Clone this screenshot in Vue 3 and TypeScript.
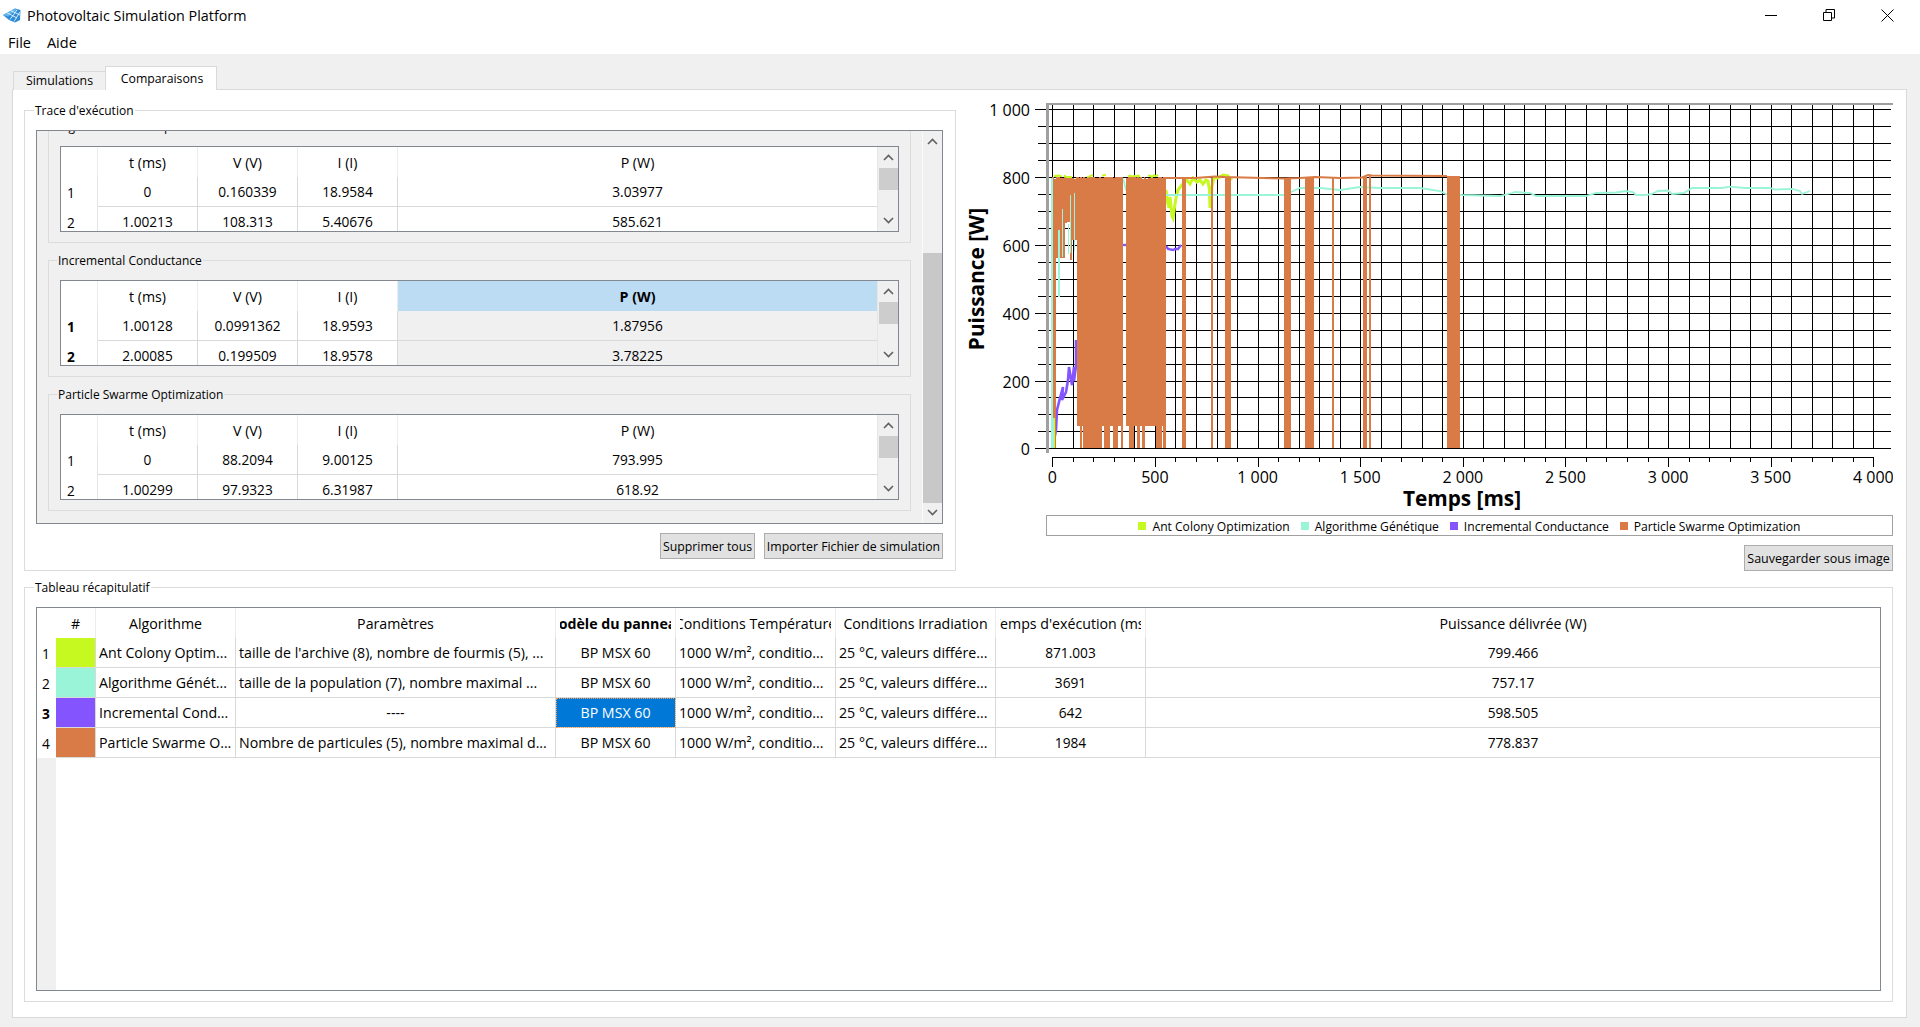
<script setup lang="ts">
interface Trace { title: string; selected?: boolean; rows: string[][] }
const traces: Trace[] = [
  { title: 'Algorithme Génétique', rows: [['0', '0.160339', '18.9584', '3.03977'], ['1.00213', '108.313', '5.40676', '585.621']] },
  { title: 'Incremental Conductance', selected: true, rows: [['1.00128', '0.0991362', '18.9593', '1.87956'], ['2.00085', '0.199509', '18.9578', '3.78225']] },
  { title: 'Particle Swarme Optimization', rows: [['0', '88.2094', '9.00125', '793.995'], ['1.00299', '97.9323', '6.31987', '618.92']] },
]
const miniHeads = ['t (ms)', 'V (V)', 'I (I)', 'P (W)']

const lime = '#c6f91f'
const teal = '#9af5d8'
const purple = '#8455ff'
const orange = '#d97b46'

const summaryHeads = ['#', 'Algorithme', 'Paramètres', 'Modèle du panneau', 'Conditions Température', 'Conditions Irradiation', "Temps d'exécution (ms)", 'Puissance délivrée (W)']
const irr = '1000 W/m², conditio...'
const tmp = '25 °C, valeurs différe...'
const summary = [
  { color: lime, algo: 'Ant Colony Optim...', params: "taille de l'archive (8), nombre de fourmis (5), ...", center: false, time: '871.003', power: '799.466' },
  { color: teal, algo: 'Algorithme Génét...', params: 'taille de la population (7), nombre maximal ...', center: false, time: '3691', power: '757.17' },
  { color: purple, algo: 'Incremental Cond...', params: '----', center: true, time: '642', power: '598.505' },
  { color: orange, algo: 'Particle Swarme O...', params: 'Nombre de particules (5), nombre maximal d...', center: false, time: '1984', power: '778.837' },
]
const legend = [
  { color: lime, label: 'Ant Colony Optimization' },
  { color: teal, label: 'Algorithme Génétique' },
  { color: purple, label: 'Incremental Conductance' },
  { color: orange, label: 'Particle Swarme Optimization' },
]

// chart scale, in page pixels (the svg viewBox uses the same numbers)
const X0 = 1052.3
const XS = 0.20525
const Y0 = 448.3
const YS = 0.339
const snap = (v: number) => Math.round(v) + 0.5
const vGrid = Array.from({ length: 41 }, (_, i) => snap(X0 + i * 100 * XS))
const hGrid = Array.from({ length: 21 }, (_, i) => ({ y: snap(Y0 - i * 50 * YS), major: i % 4 === 0 }))
const xLabels = ['0', '500', '1 000', '1 500', '2 000', '2 500', '3 000', '3 500', '4 000'].map((t, i) => ({ t, x: X0 + i * 500 * XS }))
const yLabels = ['0', '200', '400', '600', '800', '1 000'].map((t, i) => ({ t, y: Y0 - i * 200 * YS }))

let seed = 7
const rnd = () => { seed = (seed * 16807) % 2147483647; return seed / 2147483647 }

const rect = (a: number, b: number, t: number, u: number) => `M${a} ${t}H${b}V${u}H${a}Z`
const cols: number[][] = [
  [1052, 1056, 448], [1056, 1065, 258], [1065, 1067, 223], [1067, 1070, 222], [1070, 1072, 260], [1072, 1077, 240],
  [1077, 1123, 426], [1080, 1082.3, 448], [1083.3, 1101.7, 448], [1104, 1110, 448], [1113.3, 1118.3, 448], [1121, 1123, 448],
  [1126, 1166, 426], [1129, 1134, 448], [1137.3, 1140.3, 448], [1141.7, 1145, 448], [1155.7, 1162, 448], [1163.3, 1166, 448],
]
let orangePath = ''
for (const [a, b, u] of cols) {
  for (let x = a; x < b; x += 2) {
    orangePath += rect(x, Math.min(x + 2, b), 176.5 + rnd() * 2.5, u)
  }
}
const bars: number[][] = [
  [1181.6, 1186, 178], [1211, 1213, 178], [1225, 1230.6, 178], [1284, 1291, 178], [1305, 1314, 178],
  [1332, 1334, 178], [1363, 1367, 177], [1369, 1371, 176], [1447.3, 1460, 176],
]
for (const [a, b, t] of bars) orangePath += rect(a, b, t, 448)

const line = (p: number[][]) => 'M' + p.map((q) => q.join(' ')).join('L')
const orangeLine = line([[1166, 178], [1195, 178], [1215, 176.5], [1225, 177], [1284, 178.5], [1300, 178], [1315, 177], [1340, 178], [1362, 177.5], [1368, 175], [1372, 175.5], [1447, 176]])
const tealLine = line([[1123, 178], [1126, 190], [1165, 195], [1284, 195], [1291, 192], [1300, 188], [1320, 188], [1340, 190], [1360, 187], [1380, 188], [1420, 188], [1440, 191], [1446, 194], [1462, 195], [1500, 196], [1512, 193], [1515, 192], [1530, 193], [1536, 196], [1586, 196], [1596, 193], [1616, 192.5], [1626, 191], [1633, 192], [1636, 195], [1646, 195], [1652, 194], [1658, 191], [1668, 190.5], [1672, 194], [1684, 193], [1692, 188], [1722, 188], [1730, 186.7], [1745, 188], [1770, 188], [1775, 189.5], [1792, 189], [1800, 191], [1802, 194], [1810, 191]])
const tealSpikes = rect(1051, 1052.5, 178, 448) + rect(1057.5, 1059.5, 230, 297) + rect(1061.5, 1063, 209, 257) + rect(1067.5, 1068.5, 224, 254) + rect(1069.5, 1071, 195, 253) + rect(1073.5, 1075, 193, 251) + rect(1051, 1053.5, 418, 448)
const limeSliver = rect(1053.5, 1054.5, 418, 448)
const limeAfter = line([[1166, 190], [1167, 200], [1169, 208], [1170, 197], [1172, 216], [1173, 218], [1175, 204], [1176, 198], [1178, 190], [1181, 186], [1187, 180], [1190, 184], [1193, 178], [1197, 182], [1200, 180], [1203, 184], [1206, 180], [1208, 181], [1209.5, 190], [1210, 208], [1212, 186], [1214, 178], [1218, 178], [1223, 175], [1228, 176], [1232, 180]])
const limeTopRanges = [[1054, 1062], [1064, 1072], [1087, 1094], [1102, 1106], [1128, 1140], [1148, 1158]]
const limeTopLine = limeTopRanges.map(([a, b]) => {
  const p: number[][] = []
  for (let x = a; x <= b; x += 2) p.push([x, 175 + rnd() * 2.2])
  return line(p)
}).join('')
const purpleLine = line([[1053, 446], [1056, 430], [1057, 410], [1060, 398], [1063, 387], [1062, 400], [1066, 392], [1068, 380], [1069, 367], [1072, 385], [1074, 367], [1074, 381], [1076, 366], [1076, 340]])
const purpleBit = line([[1123, 245], [1127, 245]])
const purpleAfter = line([[1166, 246], [1168, 249], [1173, 250], [1175, 249], [1178, 249], [1181, 245]])
</script>

<template>
  <div class="win">
    <header class="titlebar">
      <svg class="logo" width="18" height="15" viewBox="0 0 18 15">
        <path d="M0 7 L12 0.5 L17.5 2 L17 12 L12 14.5 L6 12 Z" fill="#2d8ad6" />
        <path d="M0 7 L12 0.5 L14 1.5 L5 8.5 Z" fill="#62b6ee" />
        <path d="M4 4.8 L14 10 M8 2.8 L17 7 M7 11.5 L14 2 M11 13.5 L17 4" stroke="#e3f3fd" stroke-width="0.9" fill="none" />
      </svg>
      <span class="title">Photovoltaic Simulation Platform</span>
      <div class="controls">
        <svg width="12" height="12" viewBox="0 0 12 12" class="c-min"><path d="M0 6.5H12" stroke="#000" fill="none" /></svg>
        <svg width="12" height="12" viewBox="0 0 12 12" class="c-max"><path d="M0.5 3.5H8.5V11.5H0.5ZM3 3V0.5H11.5V9H9" stroke="#000" fill="none" /></svg>
        <svg width="13" height="13" viewBox="0 0 13 13" class="c-close"><path d="M0.5 0.5L12.5 12.5M12.5 0.5L0.5 12.5" stroke="#000" fill="none" /></svg>
      </div>
    </header>
    <nav class="menubar"><span>File</span><span>Aide</span></nav>

    <main class="content">
      <div class="tabs">
        <div class="tab">Simulations</div>
        <div class="tab active">Comparaisons</div>
      </div>
      <div class="pane">
        <div class="top-row">
          <section class="group trace">
            <span class="g-title">Trace d'exécution</span>
            <div class="scroll">
              <div class="scroll-view">
                <div class="scroll-list">
                  <section v-for="t in traces" :key="t.title" class="sub">
                    <span class="g-title sub-title">{{ t.title }}</span>
                    <div class="mini">
                      <div class="mini-grid" :class="{ sel: t.selected }">
                        <div class="mh corner"></div>
                        <div v-for="(h, hi) in miniHeads" :key="h" class="mh" :class="{ hl: t.selected && hi === 3 }">{{ h }}</div>
                        <template v-for="(r, ri) in t.rows" :key="ri">
                          <div class="rh">{{ ri + 1 }}</div>
                          <div v-for="(c, ci) in r" :key="ci" class="mc" :class="{ gr: t.selected && ci === 3 }">{{ c }}</div>
                        </template>
                      </div>
                      <div class="sb">
                        <svg class="chev" width="11" height="7" viewBox="0 0 11 7"><path d="M1 6L5.5 1.5L10 6" /></svg>
                        <div class="sb-thumb"></div>
                        <div class="sb-fill"></div>
                        <svg class="chev" width="11" height="7" viewBox="0 0 11 7"><path d="M1 1L5.5 5.5L10 1" /></svg>
                      </div>
                    </div>
                  </section>
                </div>
              </div>
              <div class="vbar">
                <svg class="chev" width="11" height="7" viewBox="0 0 11 7"><path d="M1 6L5.5 1.5L10 6" /></svg>
                <div class="vbar-thumb"></div>
                <svg class="chev" width="11" height="7" viewBox="0 0 11 7"><path d="M1 1L5.5 5.5L10 1" /></svg>
              </div>
            </div>
            <div class="btn-row">
              <button class="btn b1">Supprimer tous</button>
              <button class="btn b2">Importer Fichier de simulation</button>
            </div>
          </section>

          <section class="chart-col">
            <svg class="plot" width="927" height="412" viewBox="966 103 927 412">
              <g shape-rendering="crispEdges" stroke="#000" stroke-width="1">
                <line v-for="x in vGrid" :key="'v' + x" :x1="x" :x2="x" y1="104" y2="449" />
                <line v-for="h in hGrid" :key="'h' + h.y" :x1="h.major ? 1035 : 1038" x2="1891" :y1="h.y" :y2="h.y" />
                <line x1="1052" x2="1874" y1="457.5" y2="457.5" />
                <line v-for="(x, i) in vGrid" :key="'t' + x" :x1="x" :x2="x" y1="457" :y2="i % 5 === 0 ? 467 : 462" />
              </g>
              <path :d="limeAfter" :stroke="lime" stroke-width="3" fill="none" />
              <path :d="limeTopLine" :stroke="lime" stroke-width="2" fill="none" />
              <path :d="tealLine" :stroke="teal" stroke-width="1.8" fill="none" />
              <path :d="purpleLine" :stroke="purple" stroke-width="2.6" fill="none" />
              <path :d="purpleBit" :stroke="purple" stroke-width="2.4" fill="none" />
              <path :d="purpleAfter" :stroke="purple" stroke-width="2.4" fill="none" />
              <path :d="orangeLine" :stroke="orange" stroke-width="2" fill="none" />
              <path :d="orangePath" :fill="orange" shape-rendering="crispEdges" />
              <path :d="tealSpikes" :fill="teal" shape-rendering="crispEdges" />
              <path :d="limeSliver" :fill="lime" shape-rendering="crispEdges" />
              <g shape-rendering="crispEdges" fill="#a0a0a0">
                <rect x="1046" y="103" width="3" height="350" />
                <rect x="1046" y="103" width="847" height="2" />
              </g>
              <text v-for="l in yLabels" :key="l.t" class="tick" x="1030" :y="l.y + 7" text-anchor="end">{{ l.t }}</text>
              <text v-for="l in xLabels" :key="l.t" class="tick" :x="l.x" y="483" text-anchor="middle">{{ l.t }}</text>
              <text class="axis" x="1462" y="506" text-anchor="middle">Temps [ms]</text>
              <text class="axis" transform="translate(984 279) rotate(-90)" text-anchor="middle">Puissance [W]</text>
            </svg>
            <div class="legend">
              <span v-for="l in legend" :key="l.label" class="leg-item">
                <i class="swatch" :style="{ background: l.color }"></i>{{ l.label }}
              </span>
            </div>
            <div class="chart-btn"><button class="btn b3">Sauvegarder sous image</button></div>
          </section>
        </div>

        <section class="group recap">
          <span class="g-title">Tableau récapitulatif</span>
          <div class="sum">
            <div class="sh corner2"></div>
            <div v-for="(h, i) in summaryHeads" :key="h" class="sh" :class="{ bold: i === 3 }"><span class="sh-in"><span>{{ h }}</span></span></div>
            <template v-for="(r, i) in summary" :key="r.algo">
              <div class="srh" :class="{ bold: i === 2 }">{{ i + 1 }}</div>
              <div class="sc" :style="{ background: r.color }"></div>
              <div class="sc left txt">{{ r.algo }}</div>
              <div class="sc txt" :class="{ left: !r.center }">{{ r.params }}</div>
              <div class="sc txt" :class="{ current: i === 2 }">BP MSX 60</div>
              <div class="sc left txt">{{ irr }}</div>
              <div class="sc left txt">{{ tmp }}</div>
              <div class="sc">{{ r.time }}</div>
              <div class="sc last">{{ r.power }}</div>
            </template>
            <div class="sum-empty-h"></div>
            <div class="sum-empty"></div>
          </div>
        </section>
      </div>
    </main>
  </div>
</template>

<style scoped>
.win { width: 1920px; height: 1027px; display: flex; flex-direction: column; font-family: "Open Sans", "Liberation Sans", sans-serif; color: #000; background: #f0f0f0; overflow: hidden; }
.titlebar { height: 30px; background: #fff; display: flex; align-items: center; padding-left: 3px; position: relative; }
.logo { margin-right: 6px; }
.title { font-size: 14.35px; }
.controls { margin-left: auto; display: flex; align-items: center; height: 30px; }
.c-min { margin-right: 46px; }
.c-max { margin-right: 46px; }
.c-close { margin-right: 26px; }
.menubar { height: 24px; background: #fff; display: flex; gap: 16px; padding-left: 8px; font-size: 14.5px; align-items: center; }
.content { flex: 1; padding: 12px 13px 9px 12px; display: flex; flex-direction: column; min-height: 0; }
.tabs { display: flex; height: 24px; padding-left: 1px; align-items: flex-end; margin-bottom: -1px; z-index: 1; }
.tab { font: 12.3px "Open Sans", sans-serif; box-sizing: border-box; width: 93px; height: 19px; border: 1px solid #d9d9d9; border-bottom: none; background: #f0f0f0; display: flex; align-items: center; justify-content: center; padding-bottom: 2px; }
.tab.active { width: 112px; height: 24px; background: #fff; margin-left: -1px; padding: 0 0 0 2px; }
.pane { flex: 1; min-height: 0; background: #fff; border: 1px solid #d9d9d9; padding: 13px 13px 15px 11px; display: flex; flex-direction: column; gap: 16px; }
.top-row { display: flex; gap: 10px; }
.group { position: relative; border: 1px solid #dcdcdc; box-sizing: border-box; }
.g-title { position: absolute; left: 9px; top: -8px; background: #fff; padding: 0 1px; font: 12px/16px "Open Sans", sans-serif; white-space: nowrap; }
.trace { width: 932px; height: 461px; margin-top: 7px; padding: 19px 12px 0 11px; }
.scroll { height: 394px; box-sizing: border-box; border: 1px solid #828790; background: #f0f0f0; display: flex; }
.scroll-view { flex: 1; overflow: hidden; min-width: 0; }
.scroll-list { margin: -5px 0 0 11px; width: 863px; display: flex; flex-direction: column; gap: 17px; }
.sub { position: relative; box-sizing: border-box; height: 117px; border: 1px solid #dcdcdc; padding: 19px 11px 0 11px; }
.sub-title { background: #f0f0f0; left: 8px; }
.mini { height: 86px; box-sizing: border-box; border: 1px solid #828790; background: #fff; display: flex; }
.mini-grid { flex: 1; min-width: 0; height: 84px; overflow: hidden; display: grid; grid-template-columns: 37px 100px 100px 100px 1fr; grid-auto-rows: 30px; align-content: start; font-size: 13.7px; }
.mh { display: flex; align-items: center; justify-content: center; border-right: 1px solid #ececec; padding-top: 1px; box-sizing: border-box; font-size: 14.2px; }
.mh:nth-child(5) { border-right: none; }
.mh.hl { background: #bcdcf4; font-weight: 700; }
.rh { display: flex; align-items: center; padding: 1px 0 0 6px; box-sizing: border-box; border-right: 1px solid #e4e4e4; }
.sel .rh { font-weight: 700; }
.mc { display: flex; align-items: center; justify-content: center; border-right: 1px solid #d9d9d9; border-bottom: 1px solid #d9d9d9; box-sizing: border-box; }
.mc:nth-child(5n) { border-right: none; }
.mc.gr { background: #f0f0f0; border-right: none; }
.sb { width: 21px; flex: none; background: #f0f0f0; border-left: 1px solid #e6e6e6; box-sizing: border-box; display: flex; flex-direction: column; align-items: center; padding: 7px 0 7px 0; }
.sb-thumb { width: 19px; height: 22px; background: #cdcdcd; margin-top: 7px; }
.sb-fill { flex: 1; }
.chev { fill: none; stroke: #606060; stroke-width: 1.6; flex: none; }
.vbar { width: 20px; flex: none; display: flex; flex-direction: column; align-items: center; padding: 7px 0 7px; box-sizing: border-box; border-left: 1px solid #fafafa; background: #f0f0f0; }
.vbar-thumb { width: 19px; height: 250px; flex: none; background: #c8c8c8; margin-top: 108px; margin-bottom: 6px; }
.btn-row { display: flex; justify-content: flex-end; gap: 9px; margin-top: 9px; }
.btn { box-sizing: border-box; height: 26px; padding: 0; background: #e1e1e1; border: 1px solid #adadad; font: 12.3px "Open Sans", sans-serif; color: #000; white-space: nowrap; }
.b1 { width: 95px; }
.b2 { width: 179px; }
.b3 { width: 149px; font-size: 12.5px; }
.chart-col { width: 927px; display: flex; flex-direction: column; }
.plot { display: block; }
.tick { font: 16px "Open Sans", sans-serif; fill: #000; }
.axis { font: 700 20.8px "Open Sans", sans-serif; fill: #000; }
.legend { margin-left: 80px; height: 21px; box-sizing: border-box; border: 1px solid #a0a0a0; padding-top: 1px; display: flex; align-items: center; justify-content: center; gap: 11px; font: 12.1px "Open Sans", sans-serif; }
.leg-item { display: inline-flex; align-items: center; white-space: nowrap; }
.swatch { width: 8px; height: 8px; margin-right: 6px; display: block; }
.chart-btn { display: flex; justify-content: flex-end; margin-top: 9px; }
.recap { height: 415px; padding: 19px 11px 10px 11px; }
.sum { height: 100%; box-sizing: border-box; border: 1px solid #828790; display: grid; grid-template-columns: 19px 40px 140px 320px 120px 160px 160px 150px 1fr; grid-template-rows: repeat(5, 30px) 1fr; font-size: 13.7px; }
.sh { border-right: 1px solid #ececec; box-sizing: border-box; padding: 1px 4px 0; display: flex; align-items: center; min-width: 0; font-size: 14.2px; }
.sh:nth-child(9) { border-right: none; }
.corner2 { border-right: none; }
.sh-in { width: 100%; overflow: hidden; display: flex; justify-content: center; white-space: nowrap; }
.sh-in span { flex: none; }
.bold { font-weight: 700; }
.srh { display: flex; align-items: center; justify-content: center; padding: 1px 1px 0 0; box-sizing: border-box; }
.sc { box-sizing: border-box; min-width: 0; display: flex; align-items: center; justify-content: center; border-right: 1px solid #d9d9d9; border-bottom: 1px solid #d9d9d9; white-space: nowrap; overflow: hidden; }
.sc.txt { font-size: 14.2px; }
.sc.left { justify-content: flex-start; padding-left: 3px; }
.sc.last { border-right: none; }
.sc.current { background: #0078d7; color: #fff; outline: 1px dotted #f0a050; outline-offset: -1px; }
.sum-empty-h { background: #f0f0f0; }
.sum-empty { grid-column: 2 / -1; }
</style>

<style>
html, body { margin: 0; background: #f0f0f0; }
</style>
